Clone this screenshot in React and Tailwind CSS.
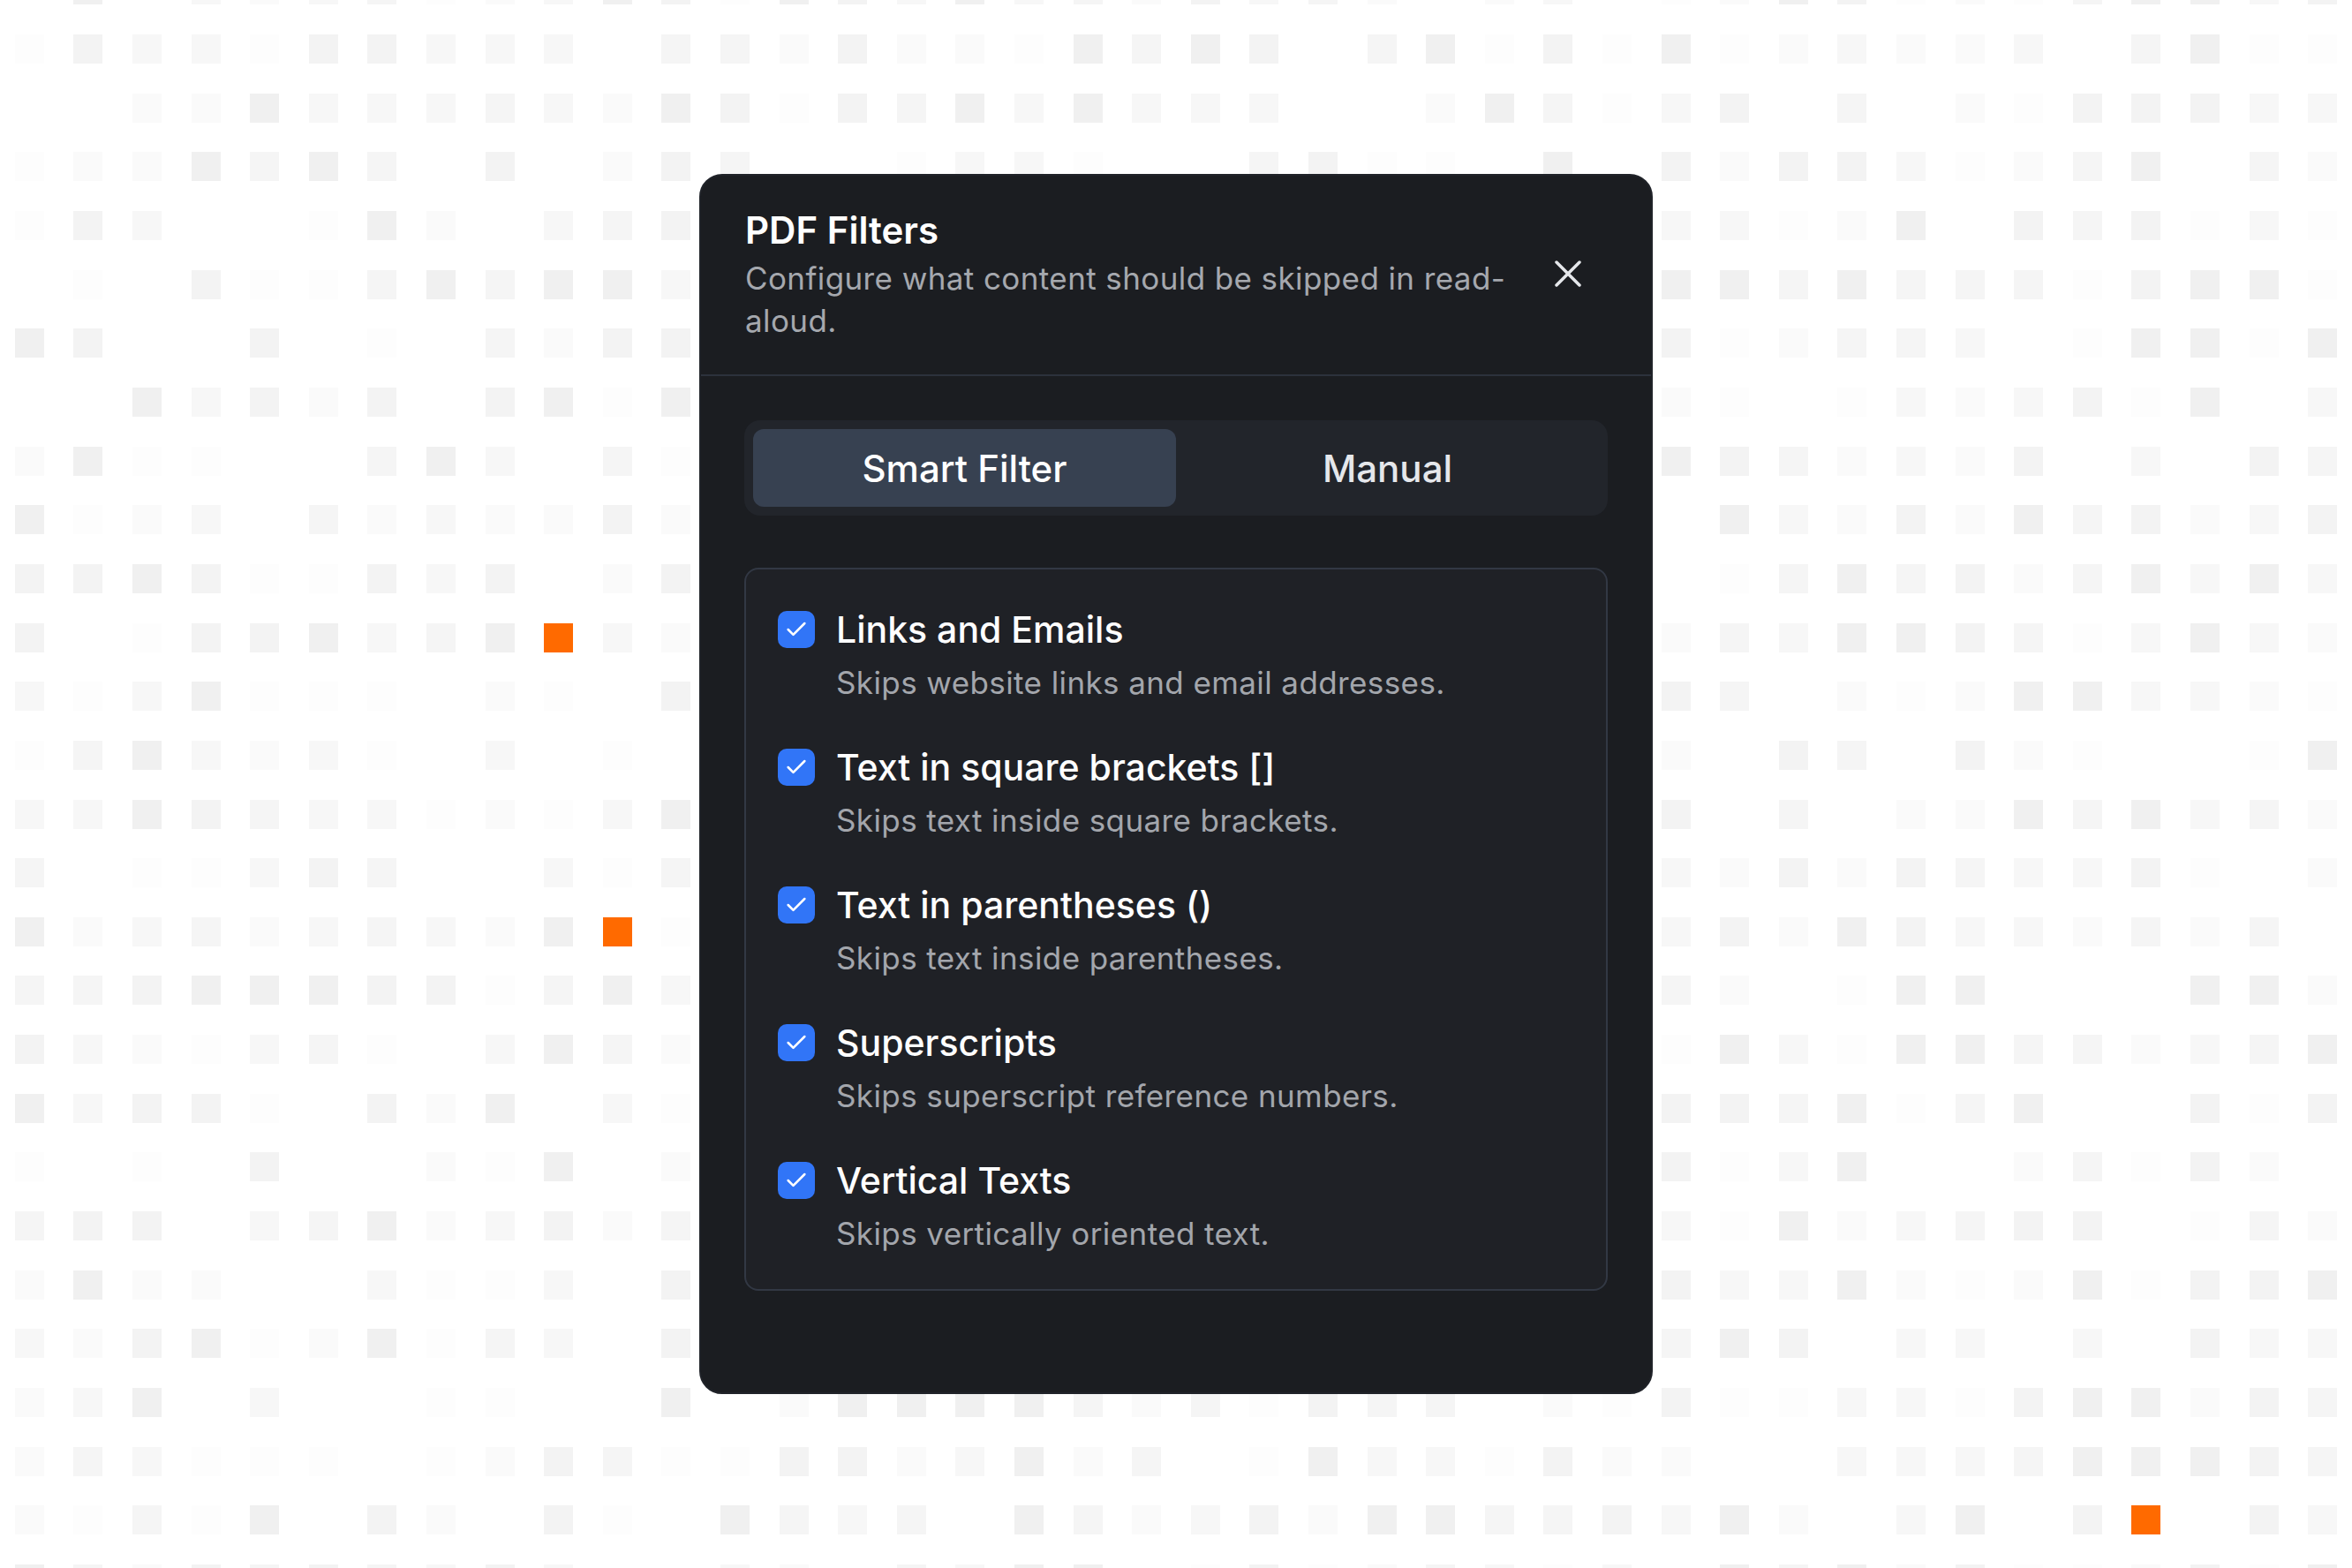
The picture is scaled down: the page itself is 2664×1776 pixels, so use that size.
import React, { useState } from "react";

const shades = [
	"bg-transparent",
	"bg-[#fdfdfd]",
	"bg-[#fafafa]",
	"bg-[#f7f7f7]",
	"bg-[#f5f5f5]",
	"bg-[#f3f3f3]",
	"bg-[#f0f0f0]",
];

const orange = ["9-11", "10-16", "36-26"];

const rand = (c, r) => {
	const v = Math.sin(c * 12.9898 + r * 78.233) * 43758.5453;
	return v - Math.floor(v);
};

const filters = [
	{ id: "links", label: "Links and Emails", desc: "Skips website links and email addresses." },
	{ id: "square", label: "Text in square brackets []", desc: "Skips text inside square brackets." },
	{ id: "parens", label: "Text in parentheses ()", desc: "Skips text inside parentheses." },
	{ id: "sup", label: "Superscripts", desc: "Skips superscript reference numbers." },
	{ id: "vertical", label: "Vertical Texts", desc: "Skips vertically oriented text." },
];

const Backdrop = () => {
	const cells = [];
	for (let r = 0; r < 28; r++) {
		for (let c = 0; c < 40; c++) {
			const key = `${c}-${r}`;
			let cls = shades[Math.floor(rand(c, r) * shades.length)];
			if (orange.includes(key)) cls = "bg-[#ff6a00]";
			cells.push(
				<div key={key} className="h-[66.67px] flex items-center justify-center">
					<div className={`w-[33px] h-[33px] ${cls}`} />
				</div>
			);
		}
	}
	return (
		<div className="grid grid-cols-[repeat(40,minmax(0,1fr))] w-full mt-[-44.5px]">
			{cells}
		</div>
	);
};

const CheckBox = ({ checked, onChange }) => (
	<button
		onClick={onChange}
		className={`mt-[7px] w-[42px] h-[42px] shrink-0 rounded-[10px] flex items-center justify-center ${
			checked ? "bg-[#3175f7]" : "border-2 border-[#4b5563]"
		}`}
	>
		{checked && (
			<svg width="28" height="28" viewBox="0 0 24 24" fill="none" stroke="white" strokeWidth="2.2" strokeLinecap="round" strokeLinejoin="round">
				<path d="M20 6 9 17l-5-5" />
			</svg>
		)}
	</button>
);

export default function App() {
	const [tab, setTab] = useState("smart");
	const [checked, setChecked] = useState({
		links: true,
		square: true,
		parens: true,
		sup: true,
		vertical: true,
	});

	const toggle = (id) => setChecked({ ...checked, [id]: !checked[id] });

	return (
		<div className="relative w-[2664px] h-[1776px] overflow-hidden bg-white font-['Inter','Noto_Sans',sans-serif]">
			<Backdrop />

			<div className="absolute inset-0 flex items-center justify-center">
				<div className="w-[1080px] h-[1382px] rounded-[26px] bg-[#1b1d21] border-2 border-[#202329] flex flex-col">
					{/* header */}
					<div className="flex items-center pl-[50px] pr-[78px] pt-[34px] pb-[37px] border-b-2 border-[#2c323c]">
						<div className="flex-1 pr-[40px]">
							<h2 className="text-[42px] leading-[56px] font-semibold text-white">PDF Filters</h2>
							<p className="mt-[2px] text-[35px] leading-[48px] tracking-[0.4px] text-[#a5a8ae]">
								Configure what content should be skipped in read-aloud.
							</p>
						</div>
						<button className="w-[32px] h-[32px] text-[#e5e7eb]">
							<svg width="32" height="32" viewBox="0 0 32 32" fill="none" stroke="currentColor" strokeWidth="3.5" strokeLinecap="round">
								<path d="M3 3 29 29M29 3 3 29" />
							</svg>
						</button>
					</div>

					{/* body */}
					<div className="px-[49px] pt-[50px]">
						<div className="grid grid-cols-2 p-[10px] h-[108px] rounded-[18px] bg-[#22252b]">
							<button
								onClick={() => setTab("smart")}
								className={`rounded-[12px] text-[42px] font-medium ${
									tab === "smart" ? "bg-[#374151] text-white" : "text-[#e5e7eb]"
								}`}
							>
								Smart Filter
							</button>
							<button
								onClick={() => setTab("manual")}
								className={`rounded-[12px] text-[42px] font-medium ${
									tab === "manual" ? "bg-[#374151] text-white" : "text-[#e5e7eb]"
								}`}
							>
								Manual
							</button>
						</div>

						<div className="mt-[59px] rounded-[16px] border-2 border-[#323844] bg-[#1f2126] pl-[36px] pr-[36px] pt-[40px] pb-[39px] flex flex-col gap-[44px]">
							{filters.map((f) => (
								<div key={f.id} className="flex gap-[24px]">
									<CheckBox checked={checked[f.id]} onChange={() => toggle(f.id)} />
									<div>
										<div className="text-[41px] leading-[56px] font-medium text-white">{f.label}</div>
										<div className="mt-[8px] text-[35px] leading-[48px] tracking-[0.4px] text-[#a3a6ac]">{f.desc}</div>
									</div>
								</div>
							))}
						</div>
					</div>
				</div>
			</div>
		</div>
	);
}
